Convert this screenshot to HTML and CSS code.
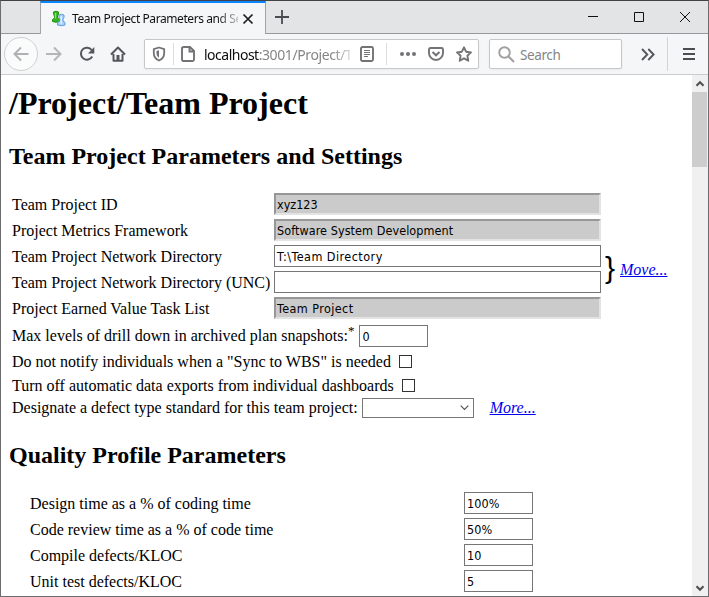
FILE: index.html
```html
<!DOCTYPE html>
<html lang="en">
<head>
<meta charset="utf-8">
<title>Team Project Parameters and Settings</title>
<link rel="stylesheet" href="styles.css">
</head>
<body>
<div class="window">
  <div class="tabbar">
    <div class="tab">
      <svg class="favicon" width="16" height="18" viewBox="0 0 16 18">
        <path d="M2.500 2q2.500-1.500 5 0v2.500L6.500 6v2l2 1.500v2q-3.500 1.500-7 0v-2l2-1.500V6l-1-1.500z" fill="#35b51f" stroke="#1c9312"/>
        <path d="M4.500 3v5.500" stroke="#8ee16c" stroke-width="1.300"/>
        <path d="M8 5q2.500-1.500 5 0v2.500L12 9v2l2 1.500v2.500q-3.500 1.500-7.500 0v-2.500L9 11V9L8 7.500z" fill="#a9d0f8" stroke="#5f9ee0"/>
        <path d="M10.200 6v8" stroke="#e1f1ff" stroke-width="1.500"/>
      </svg>
      <span class="tab-title">Team Project Parameters and Se</span>
      <svg class="tab-close" width="12" height="12" viewBox="0 0 12 12"><path d="M1.500 1.500l9 9m0-9l-9 9" stroke="#1c1c1f" stroke-width="1.700"/></svg>
    </div>
    <svg class="new-tab" width="14" height="14" viewBox="0 0 14 14"><path d="M7 0v14M0 7h14" stroke="#4a4a4f" stroke-width="1.800"/></svg>
    <div class="controls">
      <svg width="10" height="10" viewBox="0 0 10 10"><path d="M0 4.500h10" stroke="#111"/></svg>
      <svg width="10" height="10" viewBox="0 0 10 10"><path d="M.5.5h9v9h-9z" fill="none" stroke="#111"/></svg>
      <svg width="10" height="10" viewBox="0 0 10 10"><path d="M0 0l10 10m0-10L0 10" stroke="#111"/></svg>
    </div>
  </div>
  <div class="toolbar">
    <div class="back"><svg width="16" height="16" viewBox="0 0 16 16"><path d="M15.500 8H1.500m6.500-6.500L1.500 8 8 14.500" fill="none" stroke="#b0b1b3" stroke-width="2"/></svg></div>
    <svg class="forward" width="16" height="16" viewBox="0 0 16 16"><path d="M0 8h14.500M8 1.500L14.500 8 8 14.500" fill="none" stroke="#b5b6b8" stroke-width="2"/></svg>
    <svg class="reload" width="16" height="16" viewBox="0 0 16 16"><path d="M13.200 10.500A6 6 0 1 1 12.700 4" fill="none" stroke="#55565a" stroke-width="2"/><path d="M15.300 1v6.500H9z" fill="#55565a"/></svg>
    <svg class="home" width="16" height="16" viewBox="0 0 16 16"><path d="M1 8.500L8 1.500l7 7M3.500 8v6.800h9V8" fill="none" stroke="#55565a" stroke-width="2" stroke-linejoin="round"/><path d="M6.500 9h3v6h-3z" fill="#55565a"/></svg>
    <div class="urlbar">
      <svg class="shield" width="14" height="16" viewBox="0 0 14 16"><path d="M7 1.500l5.200 1.700V7c0 3.800-2 6.200-5.200 7.500C3.800 13.200 1.800 10.800 1.800 7V3.200z" fill="none" stroke="#737377" stroke-width="1.800" stroke-linejoin="round"/><path d="M7 4.200v7.500C5.200 10.500 4.500 9 4.500 7V5z" fill="#737377"/></svg>
      <span class="divider"></span>
      <svg class="page-icon" width="14" height="16" viewBox="0 0 14 16"><path d="M3 1h6l4 4v8.500q0 1.500-1.500 1.500h-8.500Q1 15 1 13.500v-11Q1 1 3 1zM8.500 1v4.500H13" fill="none" stroke="#737377" stroke-width="1.900"/></svg>
      <span class="url">localhost<span class="path">:3001/Project/T</span></span>
      <svg class="reader" width="14" height="16" viewBox="0 0 14 16"><rect x="1" y="1" width="12" height="14" rx="1.500" fill="none" stroke="#737377" stroke-width="1.900"/><path d="M4 4.500h6M4 6.500h6M4 8.500h6M4 10.500h4" stroke="#737377"/></svg>
      <span class="divider end"></span>
      <svg class="dots" width="16" height="4" viewBox="0 0 16 4"><g fill="#737377"><circle cx="2" cy="2" r="2"/><circle cx="8" cy="2" r="2"/><circle cx="14" cy="2" r="2"/></g></svg>
      <svg class="pocket" width="16" height="14" viewBox="0 0 16 14"><path d="M2.500 1h11Q15 1 15 2.500V6a7 7 0 0 1-14 0V2.500Q1 1 2.500 1z" fill="none" stroke="#737377" stroke-width="1.900"/><path d="M4.500 5L8 8.300 11.500 5" fill="none" stroke="#737377" stroke-width="2"/></svg>
      <svg class="star" width="16" height="16" viewBox="0 0 16 16"><path d="M8 1.300l2.100 4.400 4.900.7-3.600 3.300.9 5L8 12.400l-4.300 2.300.9-5L1 6.400l4.900-.7z" fill="none" stroke="#737377" stroke-width="1.900" stroke-linejoin="round"/></svg>
    </div>
    <div class="search">
      <svg width="17" height="17" viewBox="0 0 17 17"><circle cx="6.500" cy="6.500" r="5.300" fill="none" stroke="#a0a0a2" stroke-width="1.900"/><path d="M10.500 10.500l5.500 5.500" stroke="#a0a0a2" stroke-width="2.200"/></svg>
      <span>Search</span>
    </div>
    <svg class="overflow" width="14" height="13" viewBox="0 0 14 13"><path d="M1 1l5.300 5.500L1 12M7.300 1l5.300 5.500L7.300 12" fill="none" stroke="#55565a" stroke-width="1.900"/></svg>
    <span class="toolbar-divider"></span>
    <svg class="menu" width="12" height="12" viewBox="0 0 12 12"><path d="M0 1h12M0 6h12M0 11h12" stroke="#4c4d51" stroke-width="2"/></svg>
  </div>
  <div class="viewport">
    <main>
      <h1>/Project/Team Project</h1>
      <h2>Team Project Parameters and Settings</h2>
      <div class="settings">
        <div class="fields">
          <div class="row"><label>Team Project ID</label><div class="input locked">xyz123</div></div>
          <div class="row"><label>Project Metrics Framework</label><div class="input locked framework">Software System Development</div></div>
          <div class="row"><label>Team Project Network Directory</label><div class="input directory">T:\Team Directory</div></div>
          <div class="row"><label>Team Project Network Directory (UNC)</label><div class="input"></div></div>
          <div class="row"><label>Project Earned Value Task List</label><div class="input locked task-list">Team Project</div></div>
        </div>
        <div class="move"><span class="brace">}</span><a>Move...</a></div>
      </div>
      <div class="line levels"><label>Max levels of drill down in archived plan snapshots:<sup>*</sup></label><div class="input small">0</div></div>
      <div class="line notify"><label>Do not notify individuals when a "Sync to WBS" is needed</label><span class="check"></span></div>
      <div class="line exports"><label>Turn off automatic data exports from individual dashboards</label><span class="check"></span></div>
      <div class="line defect"><label>Designate a defect type standard for this team project:</label><div class="select"><svg width="9" height="6" viewBox="0 0 9 6"><path d="M.7.700l3.800 3.800L8.300.7" fill="none" stroke="#555" stroke-width="1.200"/></svg></div><a>More...</a></div>
      <h2 class="quality-title">Quality Profile Parameters</h2>
      <div class="quality">
        <div class="row"><label>Design time as a % of coding time</label><div class="input small">100%</div></div>
        <div class="row"><label>Code review time as a % of code time</label><div class="input small">50%</div></div>
        <div class="row"><label>Compile defects/KLOC</label><div class="input small">10</div></div>
        <div class="row"><label>Unit test defects/KLOC</label><div class="input small">5</div></div>
      </div>
    </main>
    <div class="scrollbar">
      <svg width="16" height="17" viewBox="0 0 16 17"><path d="M4.500 10.700L8 7.200l3.500 3.500" fill="none" stroke="#505050" stroke-width="2.100"/></svg>
      <div class="thumb"></div>
      <svg class="down" width="16" height="17" viewBox="0 0 16 17"><path d="M4.500 7.200L8 10.700l3.500-3.500" fill="none" stroke="#505050" stroke-width="2.100"/></svg>
    </div>
  </div>
</div>
</body>
</html>
```
FILE: styles.css
```css
* { box-sizing: border-box; }
body { margin: 0; width: 709px; height: 597px; overflow: hidden; }
svg { display: block; flex: none; }
.window {
  width: 709px; height: 597px;
  border: 1px solid #6c6c6f; border-top-color: #434346;
  display: flex; flex-direction: column;
  background: #fff; overflow: hidden;
}
.tabbar {
  height: 33px; flex: none; display: flex; align-items: center;
  background: linear-gradient(#e3e4e6 32px, #97989b 32px);
}
.tab {
  width: 226px; height: 33px; margin-left: 39px; flex: none;
  border: 1px solid #a3a3a6; border-top: 2px solid #0a84ff; border-bottom: 0;
  background: #f5f6f7; display: flex; align-items: center; padding-left: 10px;
}
.favicon { margin-top: 1px; }
.tab-title {
  width: 166px; margin-left: 5px; white-space: nowrap;
  font: 12px/18px "Noto Sans", sans-serif; letter-spacing: -0.42px; color: #111;
  -webkit-mask-image: linear-gradient(to right, #000 145px, transparent 172px);
  mask-image: linear-gradient(to right, #000 145px, transparent 172px);
}
.tab-close { margin-left: 4px; }
.new-tab { margin-left: 9px; margin-top: -1px; }
.controls { margin-left: auto; margin-right: 18px; margin-top: -1px; display: flex; gap: 36px; }
.toolbar {
  height: 41px; flex: none; display: flex; align-items: center;
  background: #f5f6f7; border-bottom: 1px solid #cbcccd;
}
.back {
  width: 34px; height: 34px; margin-left: 3px; flex: none;
  border: 1px solid #cfd0d1; border-radius: 50%; background: #fafbfb;
  display: flex; align-items: center; justify-content: center;
}
.forward { margin-left: 8px; }
.reload { margin-left: 17px; }
.home { margin-left: 15px; }
.urlbar, .search {
  height: 30px; flex: none; background: #fff; border: 1px solid #c7c7c8;
  border-radius: 2px; display: flex; align-items: center; box-shadow: 0 1px 3px #0000000d;
}
.urlbar { width: 335px; margin-left: 18px; }
.shield { margin-left: 7px; }
.divider { width: 1px; height: 22px; background: #dcdcdd; margin-left: 7px; }
.page-icon { margin-left: 7px; }
.url {
  width: 146px; margin-left: 9px; padding-top: 1px; white-space: nowrap;
  font: 14px/20px "Noto Sans", sans-serif; letter-spacing: -0.5px; color: #0c0c0d;
  -webkit-mask-image: linear-gradient(to right, #000 128px, transparent 154px);
  mask-image: linear-gradient(to right, #000 128px, transparent 154px);
}
.path { color: #858587; letter-spacing: -0.4px; }
.reader { margin-left: 10px; }
.divider.end { margin-left: 12px; }
.dots { margin-left: 13px; }
.pocket { margin-left: 12px; }
.star { margin-left: 12px; }
.search { width: 133px; margin-left: 10px; padding-left: 8px; gap: 5px; font: 13.5px/20px "Noto Sans", sans-serif; letter-spacing: -0.4px; color: #858587; }
.search span { padding-top: 2px; }
.overflow { margin-left: 19px; }
.toolbar-divider { width: 1px; height: 34px; margin-left: 12px; background: #d3d3d5; }
.menu { margin-left: 15px; }
.viewport { flex: 1; min-height: 0; display: flex; }
main {
  flex: 1; min-width: 0; padding: 9px 0 0 8px; overflow: hidden;
  font: 16px/18px "Liberation Serif", serif; color: #000; white-space: nowrap;
}
h1 { margin: 0; font-size: 32px; line-height: 38px; }
h2 { margin: 0; padding-top: 20px; font-size: 24px; line-height: 28px; }
.settings { display: flex; margin-top: 23px; padding-left: 3px; }
.fields, .quality { display: grid; row-gap: 4px; }
.row { display: flex; align-items: center; height: 22px; }
.fields label { width: 262px; padding-top: 1px; }
.input {
  width: 327px; height: 22px; flex: none; padding: 1px 2px 0; border: 1px solid #767676; background: #fff;
  font: 12.5px/20px "DejaVu Sans Condensed", "DejaVu Sans", sans-serif; font-stretch: condensed;
}
.locked { border: 2px solid; border-color: #979797 #e3e3e3 #e3e3e3 #979797; background: #cbcbcb; line-height: 19px; padding: 0 1px; }
.framework { letter-spacing: 0.07px; }
.directory { letter-spacing: 0.46px; }
.task-list { letter-spacing: 0.42px; }
.small { width: 69px; letter-spacing: 0.1px; }
.move { display: flex; align-items: center; height: 52px; margin: 51px 0 0 4px; }
.brace { width: 15px; margin-top: -4px; font: 30px/40px "Liberation Sans", sans-serif; }
a { color: #0000ee; font-style: italic; text-decoration: underline; }
.line { display: flex; align-items: center; padding-left: 3px; }
.levels { height: 24px; margin-top: 5px; }
.levels .input { margin-left: 5px; }
sup { font-size: 13px; line-height: 0; }
.notify { height: 26px; }
.notify label { padding-top: 2px; }
.exports { height: 22px; }
.exports label { padding-top: 2px; }
.check { width: 13px; height: 13px; border: 1px solid #333; margin-left: 8px; background: #fff; }
.defect { height: 22px; margin-top: 1px; }
.select {
  width: 112px; height: 20px; margin-left: 4px; border: 1px solid #767676;
  display: flex; align-items: center; justify-content: flex-end; padding-right: 4px;
}
.defect a { margin-left: 16px; }
.quality-title { margin-top: 2px; }
.quality { padding-left: 21px; margin-top: 23px; }
.quality label { width: 434px; padding-top: 1px; }
.scrollbar { width: 16px; flex: none; background: #f0f0f0; display: flex; flex-direction: column; }
.thumb { width: 15px; height: 75px; background: #cdcdcd; }
.down { margin-top: auto; }
```
